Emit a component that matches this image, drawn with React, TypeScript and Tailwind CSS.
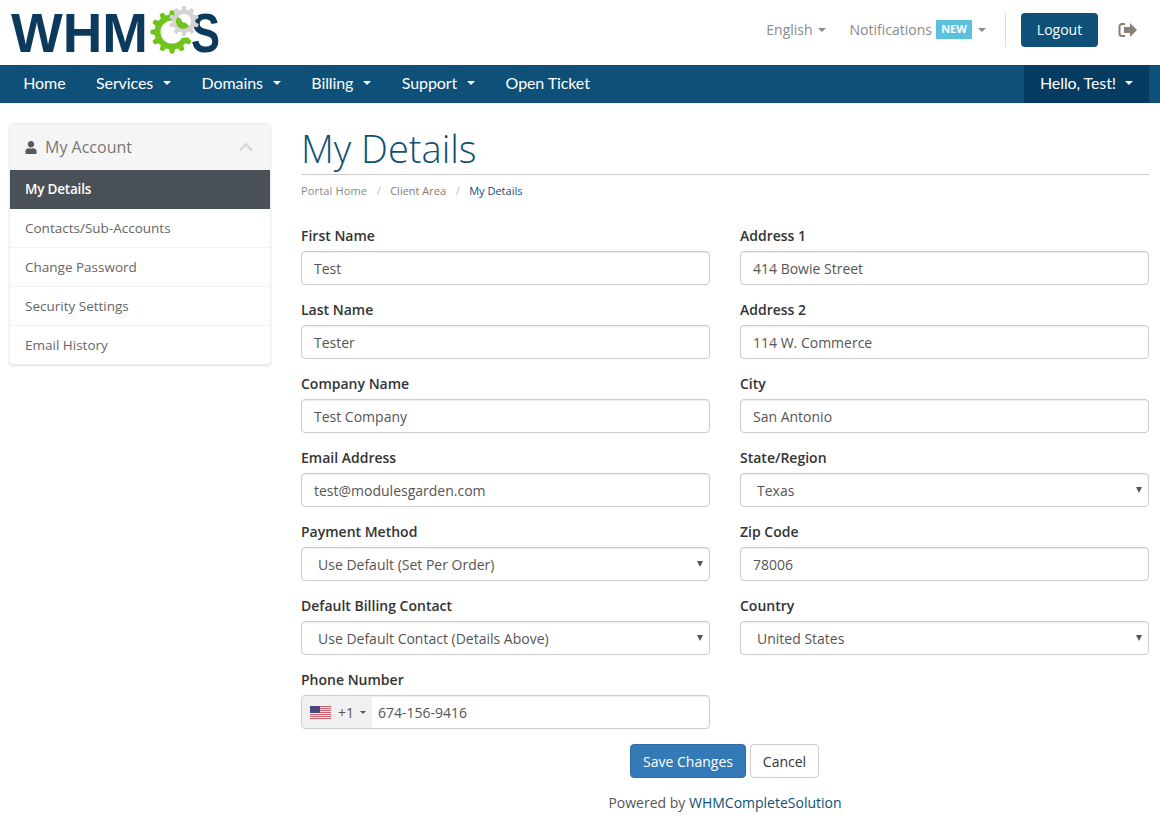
import React from "react";
import { FaUser, FaChevronUp } from "react-icons/fa";

const gearPath = (cx: number, cy: number, outer: number, root: number, teeth: number) => {
  const pts: string[] = [];
  const step = (Math.PI * 2) / teeth;
  for (let i = 0; i < teeth; i++) {
    const a = i * step - Math.PI / 2;
    const list: [number, number][] = [
      [root, a - step * 0.32],
      [outer, a - step * 0.18],
      [outer, a + step * 0.18],
      [root, a + step * 0.32],
    ];
    for (const [r, t] of list) {
      pts.push(`${(cx + r * Math.cos(t)).toFixed(2)} ${(cy + r * Math.sin(t)).toFixed(2)}`);
    }
  }
  return "M" + pts.join("L") + "Z";
};

function Logo() {
  return (
    <svg width="240" height="65" viewBox="0 0 240 65" className="block">
      <text x="10" y="52" fontFamily="'Liberation Sans', sans-serif" fontWeight="700" fontSize="56" fill="#0b3a5c" textLength="137" lengthAdjust="spacingAndGlyphs">WHM</text>
      <text x="190" y="52" fontFamily="'Liberation Sans', sans-serif" fontWeight="700" fontSize="56" fill="#0b3a5c" textLength="29" lengthAdjust="spacingAndGlyphs">S</text>
      <path d={gearPath(171, 32, 21.5, 17.5, 12)} fill="#6fc31a" />
      <circle cx="171" cy="32" r="11.5" fill="#fff" />
      <path d="M174 32 L193 27 L193 37 L178 38 Z" fill="#fff" />
      <path d={gearPath(183, 21, 15, 11.5, 10)} fill="#d4d4d4" />
      <circle cx="183" cy="21" r="7" fill="#fff" />
      <path d="M176.5 17 A7 7 0 0 0 188 26 L184.5 22.5 A3 3 0 0 1 180.5 19 Z" fill="#6fc31a" />
    </svg>
  );
}

function Caret({ className }: { className: string }) {
  return <span className={`inline-block w-0 h-0 border-x-4 border-x-transparent border-t-4 ${className}`} />;
}

const navItems: { label: string; caret: boolean }[] = [
  { label: "Home", caret: false },
  { label: "Services", caret: true },
  { label: "Domains", caret: true },
  { label: "Billing", caret: true },
  { label: "Support", caret: true },
  { label: "Open Ticket", caret: false },
];

const sideItems = ["Contacts/Sub-Accounts", "Change Password", "Security Settings", "Email History"];

const fieldClass =
  "block w-full h-[34px] rounded border border-[#ccc] bg-white px-3 text-[14px] text-[#555] shadow-[inset_0_1px_1px_rgba(0,0,0,0.075)] outline-none";

function Field({ label, value }: { label: string; value: string }) {
  return (
    <div className="mb-[15px]">
      <label className="block h-[25px] text-[14px] leading-[20px] font-semibold text-[#333]">{label}</label>
      <input className={fieldClass} defaultValue={value} />
    </div>
  );
}

function SelectField({ label, value }: { label: string; value: string }) {
  return (
    <div className="mb-[15px]">
      <label className="block h-[25px] text-[14px] leading-[20px] font-semibold text-[#333]">{label}</label>
      <div className="relative">
        <select className="block w-full h-[34px] rounded border border-[#ccc] bg-white pl-4 pr-3 text-[14px] text-[#555] shadow-[inset_0_1px_1px_rgba(0,0,0,0.075)] outline-none appearance-none" defaultValue={value}>
          <option>{value}</option>
        </select>
        <span className="absolute right-[7px] top-[14px] w-0 h-0 border-x-[3px] border-x-transparent border-t-[6px] border-t-[#555]" />
      </div>
    </div>
  );
}

function Flag() {
  const stripes = [0, 1, 2, 3, 4, 5, 6];
  return (
    <svg width="21" height="13" viewBox="0 0 21 13" className="block">
      <rect width="21" height="13" fill="#f3e6e8" />
      {stripes.map((i) => (
        <rect key={i} y={i * 2} width="21" height="1" fill="#c9606f" />
      ))}
      <rect width="10" height="7" fill="#45497f" />
    </svg>
  );
}

export default function App() {
  return (
    <div className="w-[1160px] h-[815px] overflow-hidden bg-white font-['Open_Sans',sans-serif] text-[14px] text-[#333]">
      <header className="h-[65px] flex items-center">
        <div className="ml-px self-start">
          <Logo />
        </div>
        <div className="ml-auto mb-[6px] flex items-center text-[#8a8a8a] text-[14px]">
          <span>English</span>
          <Caret className="ml-[5px] border-t-[#888]" />
          <span className="ml-[24px]">Notifications</span>
          <span className="ml-1 w-9 h-[19px] flex items-center justify-center bg-[#5bc0de] text-white text-[11px] font-bold">NEW</span>
          <Caret className="ml-[6px] border-t-[#888]" />
          <div className="ml-[19px] w-px h-[34px] bg-[#ddd]" />
          <div className="ml-[15px] w-[77px] h-[34px] rounded bg-[#0e5077] text-white flex items-center justify-center">Logout</div>
          <svg width="20" height="16" viewBox="0 0 20 16" className="ml-5 mr-[22px]">
            <path d="M7 2H4a2.5 2.5 0 0 0-2.5 2.5v7A2.5 2.5 0 0 0 4 14h3" fill="none" stroke="#8c7f76" strokeWidth="2" />
            <path d="M6 5h6V1l7 7-7 7v-4H6z" fill="#8c7f76" />
          </svg>
        </div>
      </header>

      <nav className="h-[38px] bg-[#0e5077] flex items-center pl-2 pr-[11px] font-['Lato',sans-serif] text-[16px] tracking-[-0.1px] text-white">
        {navItems.map((n) => (
          <div key={n.label} className="px-[15.25px] pb-[2px] flex items-center">
            <span>{n.label}</span>
            {n.caret && <Caret className="ml-[10px] border-t-white" />}
          </div>
        ))}
        <div className="ml-auto w-[125px] h-full bg-[#063c61] flex items-center pl-4 pb-[2px]">
          <span>Hello, Test!</span>
          <Caret className="ml-[9px] border-t-white" />
        </div>
      </nav>

      <div className="flex pt-5 pl-[9px] pr-[11px]">
        <aside className="w-[262px] shrink-0 self-start rounded border border-[#eee] shadow-[0_1px_2px_rgba(0,0,0,0.12)] overflow-hidden bg-white text-[13.5px]">
          <div className="h-[46px] bg-[#f5f5f5] flex items-center pl-[15px] pr-[15px] text-[16px] text-[#777]">
            <FaUser className="text-[#58595b] w-[12px] h-[13px]" />
            <span className="ml-2">My Account</span>
            <FaChevronUp className="ml-auto mr-px text-[#d8d8d8] w-4 h-4" />
          </div>
          <div className="h-[39px] bg-[#4a5156] text-white font-semibold flex items-center px-[15px] tracking-[-0.2px]">My Details</div>
          {sideItems.map((s, i) => (
            <div key={s} className={`flex items-center px-[15px] text-[#666] ${i < 3 ? "h-[39px] border-b border-[#f3f3f3]" : "h-[38px]"}`}>
              {s}
            </div>
          ))}
        </aside>

        <main className="flex-1 ml-[30px] min-w-0">
          <h1 className="text-[38px] leading-[50px] h-[52px] font-light text-[#0e5077] border-b border-[#ccc]">My Details</h1>
          <div className="mt-[8px] h-[43px] text-[11px] leading-[15px] text-[#888] flex">
            <span className="tracking-[0.15px]">Portal Home</span>
            <span className="mx-[9.5px] text-[#bbb]">/</span>
            <span className="text-[#8a7a70]">Client Area</span>
            <span className="mx-[9.5px] text-[#bbb]">/</span>
            <span className="text-[#0e5077]">My Details</span>
          </div>

          <div className="grid grid-cols-2 gap-x-[30px]">
            <div>
              <Field label="First Name" value="Test" />
              <Field label="Last Name" value="Tester" />
              <Field label="Company Name" value="Test Company" />
              <Field label="Email Address" value="test@modulesgarden.com" />
              <SelectField label="Payment Method" value="Use Default (Set Per Order)" />
              <SelectField label="Default Billing Contact" value="Use Default Contact (Details Above)" />
              <div className="mb-[15px]">
                <label className="block h-[25px] text-[14px] leading-[20px] font-semibold text-[#333]">Phone Number</label>
                <div className="flex h-[34px] rounded border border-[#ccc] overflow-hidden shadow-[inset_0_1px_1px_rgba(0,0,0,0.075)]">
                  <div className="w-[70px] shrink-0 bg-[#f0f0f0] flex items-center pl-2 text-[#555]">
                    <Flag />
                    <span className="ml-[7px]">+1</span>
                    <Caret className="ml-[6px] border-x-[3px] border-t-[3px] border-t-[#555]" />
                  </div>
                  <input className="flex-1 min-w-0 px-[6px] bg-transparent text-[14px] text-[#555] outline-none" defaultValue="674-156-9416" />
                </div>
              </div>
            </div>
            <div>
              <Field label="Address 1" value="414 Bowie Street" />
              <Field label="Address 2" value="114 W. Commerce" />
              <Field label="City" value="San Antonio" />
              <SelectField label="State/Region" value="Texas" />
              <Field label="Zip Code" value="78006" />
              <SelectField label="Country" value="United States" />
            </div>
          </div>

          <div className="flex justify-center gap-1 pr-px">
            <button className="h-[34px] w-[116px] rounded bg-[#337ab7] border border-[#2e6da4] text-white text-[14px]">Save Changes</button>
            <button className="h-[34px] w-[69px] rounded bg-white border border-[#ccc] text-[#333] text-[14px]">Cancel</button>
          </div>
          <div className="mt-[14px] text-center text-[#555] text-[14px]">
            Powered by <span className="text-[#0e5077]">WHMCompleteSolution</span>
          </div>
        </main>
      </div>
    </div>
  );
}
